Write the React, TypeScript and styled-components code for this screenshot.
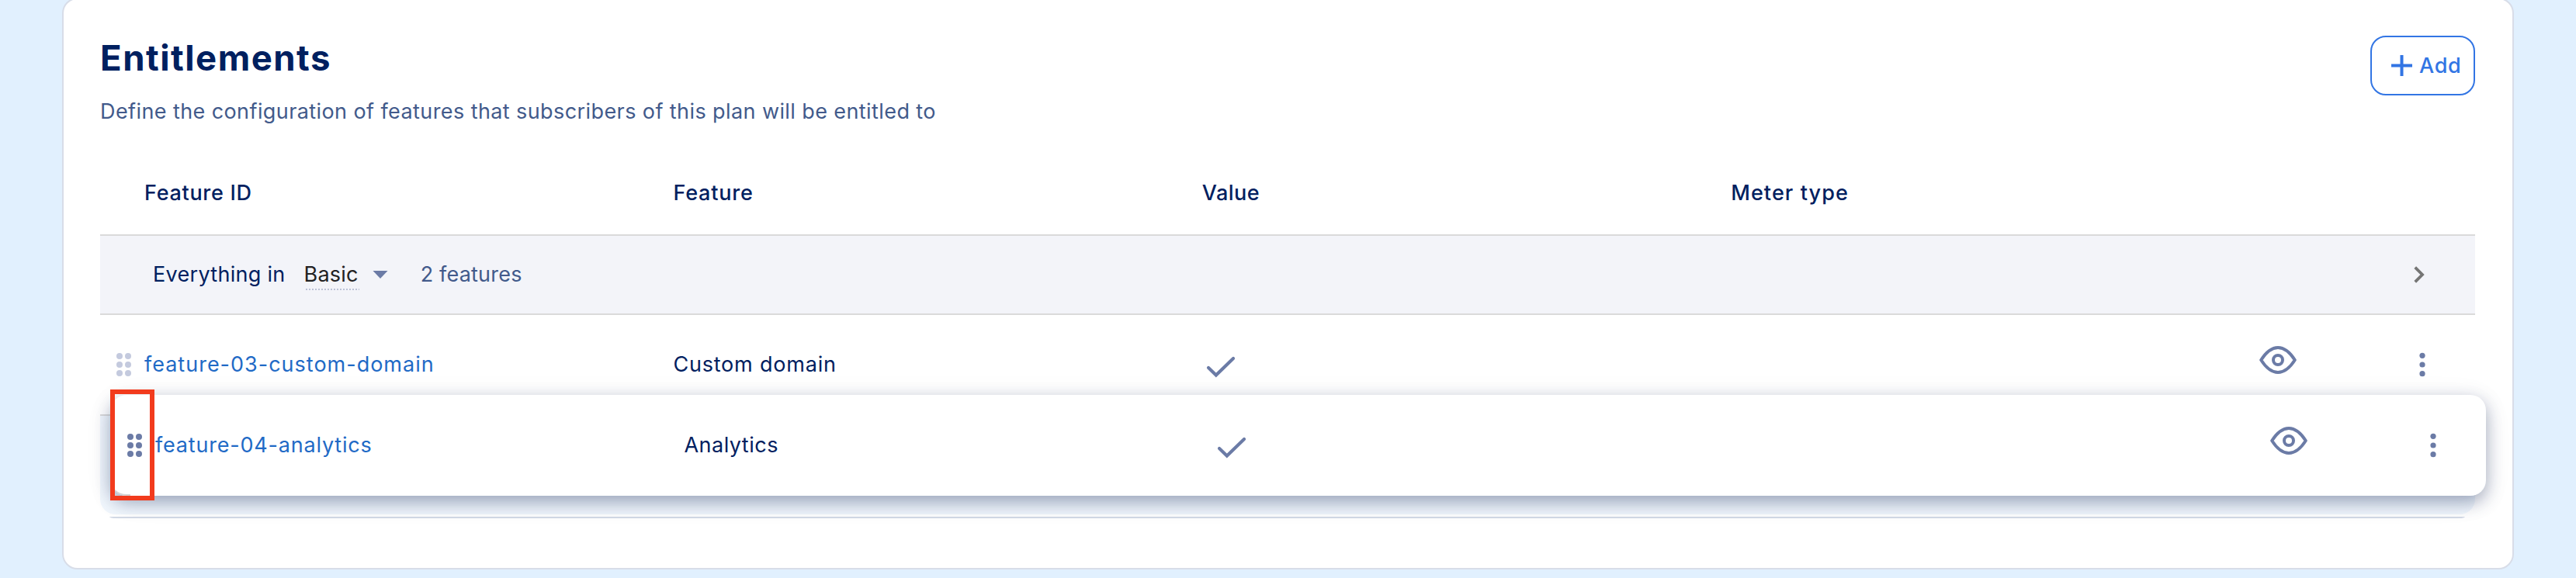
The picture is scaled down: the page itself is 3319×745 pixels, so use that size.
import React from "react";
import styled, { createGlobalStyle } from "styled-components";

const navy = "#00205f";
const slate = "#425a8b";
const iconBlue = "#6b7ba6";

const GlobalStyle = createGlobalStyle`
  * { box-sizing: border-box; }
  body {
    margin: 0;
    background: #e1f0fe;
    font-family: "Inter", "Liberation Sans", sans-serif;
    font-size: 27px;
    line-height: 34px;
    color: ${navy};
  }
  svg { display: block; flex: none; }
`;

const Page = styled.main`
  height: 745px;
  overflow: hidden;
  padding: 0 80px;
  background: #e1f0fe;
`;

const Card = styled.section`
  height: 737px;
  margin-top: -3px;
  padding: 47px 48px 0 47px;
  border: 2px solid #d8dde8;
  border-radius: 20px;
  background: #fff;
`;

const CardHeader = styled.header`
  display: flex;
  justify-content: space-between;
  align-items: flex-start;
  height: 114px;
`;

const Title = styled.h1`
  margin: 0 0 24px;
  padding-top: 1px;
  font-size: 45.5px;
  font-weight: 700;
  line-height: 56px;
  letter-spacing: 1.5px;
`;

const Description = styled.p`
  margin: 0;
  color: ${slate};
  letter-spacing: 0.41px;
`;

const AddButton = styled.button`
  display: flex;
  align-items: center;
  gap: 9px;
  width: 135px;
  height: 77px;
  padding: 0 0 0 25px;
  border: 2px solid #3275e4;
  border-radius: 20px;
  background: #fff;
  color: #3275e4;
  font: 500 27px/34px "Inter", sans-serif;
  letter-spacing: 0.7px;
`;

const Table = styled.div`
  position: relative;
  margin-top: 36px;
`;

const Row = styled.div`
  display: grid;
  grid-template-columns: 57px repeat(3, 681.4px) 1fr;
  align-items: center;
  height: 130px;
  border-bottom: 2px solid #dadada;
`;

const HeadRow = styled(Row)`
  height: 108px;
  font-weight: 500;
`;

const DraggedRow = styled(Row)`
  position: absolute;
  top: 313px;
  left: 14px;
  width: 3060px;
  border-bottom: 0;
  border-radius: 20px;
  background: #fff;
  box-shadow: 0 8px 22px rgba(35, 50, 95, 0.4), 0 6px 40px rgba(40, 50, 90, 0.06);
`;

const Text = styled.span<{ $track: number }>`
  letter-spacing: ${(p) => p.$track}px;
  white-space: nowrap;
`;

const FeatureLink = styled(Text)`
  color: #1f6ac6;
`;

const GripCell = styled.div<{ $edge?: boolean }>`
  display: flex;
  align-items: center;
  align-self: stretch;
  width: 25px;
  padding-left: 21px;
  padding-top: ${(p) => (p.$edge ? "2px" : "0")};
  border-bottom: ${(p) => (p.$edge ? "2px solid #d3d3d3" : "0")};
  border-bottom-left-radius: ${(p) => (p.$edge ? "20px" : "0")};
`;

const Actions = styled.div`
  display: flex;
  align-items: center;
  justify-content: flex-end;
  gap: 156px;
  padding-right: 62px;
`;

const EyeSlot = styled.div`
  margin-bottom: 12px;
`;

const InheritedRow = styled.div`
  display: flex;
  align-items: center;
  height: 102px;
  padding: 0 65px 0 68px;
  border-bottom: 2px solid #dadada;
  background: #f3f4f9;
`;

const PlanSelect = styled.div`
  position: relative;
  display: flex;
  align-items: center;
  gap: 18px;
  margin: 0 42px 0 24px;
  color: #222;

  &::after {
    content: "";
    position: absolute;
    left: 2px;
    top: 35px;
    width: 69px;
    height: 2px;
    background: repeating-linear-gradient(90deg, #bcc2d6 0 2px, transparent 2px 4px);
  }
`;

const Count = styled(Text)`
  flex: 1;
  color: ${slate};
`;

const DropArea = styled.div`
  height: 127px;
  border-radius: 0 0 20px 20px;
  background: #f1f7fd;
`;

const DropLine = styled.div`
  height: 2px;
  margin: 3px 13px 0 12px;
  border-radius: 0 0 8px 8px / 0 0 2px 2px;
  background: #d3dae6;
`;

const Highlight = styled.div`
  position: absolute;
  top: 306px;
  left: 13px;
  width: 57px;
  height: 143px;
  border: 6px solid #f23b1d;
`;

const Grip = ({ color }: { color: string }) => (
  <svg width="20" height="32" viewBox="0 0 20 32" fill={color}>
    {[5, 16, 27].map((y) => (
      <g key={y}>
        <circle cx="4" cy={y} r="4" />
        <circle cx="15" cy={y} r="4" />
      </g>
    ))}
  </svg>
);

const Check = () => (
  <svg width="48" height="48" viewBox="0 0 48 48" fill="none" stroke={iconBlue} strokeWidth="4.2" strokeLinecap="round">
    <path d="M8 28l9.8 9.5L40 16" />
  </svg>
);

const Eye = () => (
  <svg width="48" height="36" viewBox="0 0 48 36" fill="none" stroke={iconBlue} strokeWidth="4" strokeLinejoin="round">
    <path d="M2.2 18C8 9 15 2 24 2s16 7 21.8 16C40 27 33 34 24 34S8 27 2.2 18Z" />
    <circle cx="24" cy="18" r="6" />
  </svg>
);

const Kebab = () => (
  <svg width="12" height="34" viewBox="0 0 12 34" fill={iconBlue}>
    <circle cx="6" cy="5.3" r="3.6" />
    <circle cx="6" cy="17" r="3.6" />
    <circle cx="6" cy="28.7" r="3.6" />
  </svg>
);

type Entitlement = { id: string; idTrack: number; name: string; nameTrack: number };

const RowCells = ({ item, dragged }: { item: Entitlement; dragged?: boolean }) => (
  <>
    <GripCell $edge={dragged}>
      <Grip color={dragged ? iconBlue : "#c4cade"} />
    </GripCell>
    <FeatureLink $track={item.idTrack}>{item.id}</FeatureLink>
    <Text $track={item.nameTrack}>{item.name}</Text>
    <Check />
    <Actions>
      <EyeSlot>
        <Eye />
      </EyeSlot>
      <Kebab />
    </Actions>
  </>
);

export default function App() {
  return (
    <>
      <GlobalStyle />
      <Page>
        <Card>
          <CardHeader>
            <div>
              <Title>Entitlements</Title>
              <Description>
                Define the configuration of features that subscribers of this plan will be entitled to
              </Description>
            </div>
            <AddButton>
              <svg width="27" height="27" viewBox="0 0 27 27" stroke="currentColor" strokeWidth="4">
                <path d="M13.5 0v27M0 13.5h27" />
              </svg>
              Add
            </AddButton>
          </CardHeader>
          <Table>
            <HeadRow>
              <span />
              <Text $track={0.7}>Feature ID</Text>
              <Text $track={0.8}>Feature</Text>
              <Text $track={0.45}>Value</Text>
              <Text $track={1.1}>Meter type</Text>
            </HeadRow>
            <InheritedRow>
              <Text $track={0.3}>Everything in</Text>
              <PlanSelect>
                <Text $track={0.2}>Basic</Text>
                <svg width="20" height="10" viewBox="0 0 20 10" fill={iconBlue}>
                  <path d="M0.5 0h19L10 10z" />
                </svg>
              </PlanSelect>
              <Count $track={0.2}>2 features</Count>
              <svg width="14" height="22" viewBox="0 0 14 22" fill="none" stroke="#757575" strokeWidth="3.8">
                <path d="M1.7 1.7L11 11l-9.3 9.3" />
              </svg>
            </InheritedRow>
            <Row>
              <RowCells
                item={{ id: "feature-03-custom-domain", idTrack: 1, name: "Custom domain", nameTrack: 0.8 }}
              />
            </Row>
            <DropArea />
            <DropLine />
            <DraggedRow>
              <RowCells
                dragged
                item={{ id: "feature-04-analytics", idTrack: 0.8, name: "Analytics", nameTrack: 0.5 }}
              />
            </DraggedRow>
            <Highlight />
          </Table>
        </Card>
      </Page>
    </>
  );
}
